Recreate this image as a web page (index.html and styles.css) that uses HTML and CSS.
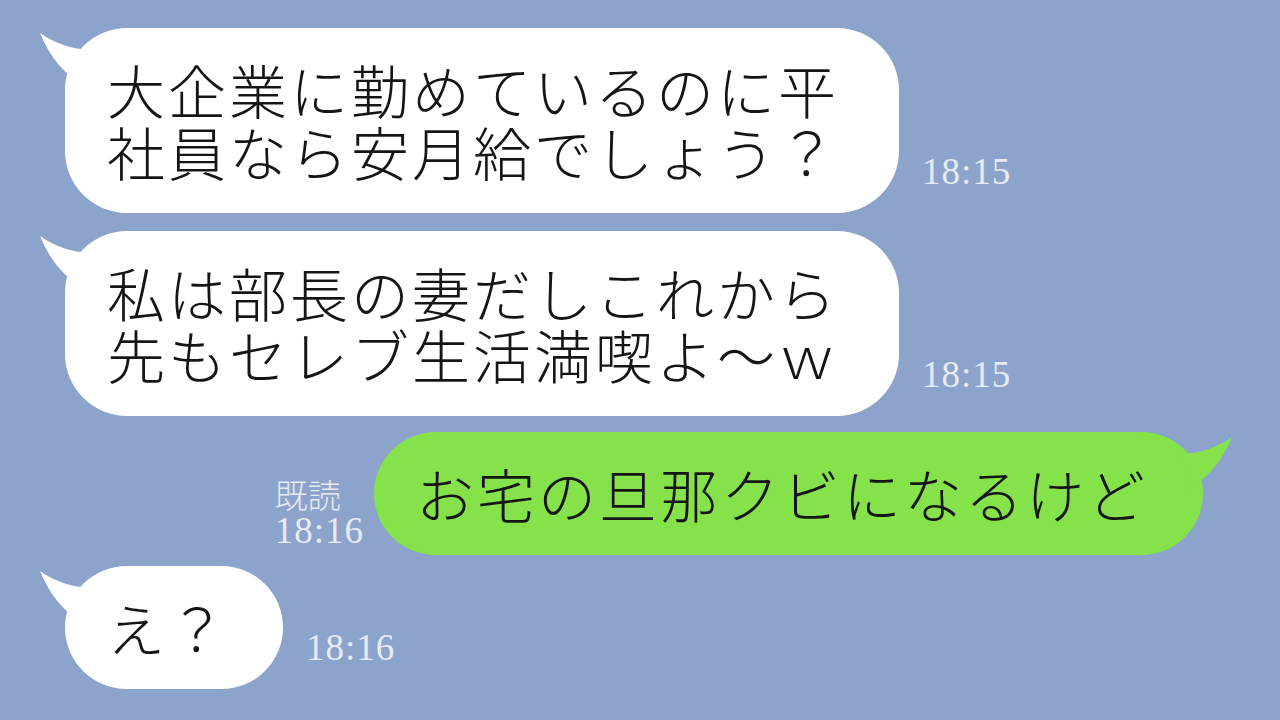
FILE: index.html
```html
<!DOCTYPE html>
<html lang="ja">
<head>
<meta charset="UTF-8" />
<title>トーク</title>
<link rel="stylesheet" href="styles.css">
</head>
<body>

<div class="chat">

    <div class="row left first">
        <div class="bubble white">
            <svg class="tail tail-left" viewBox="0 0 60 60" width="60" height="60">
                <path d="M3 5 Q 24 20 52 22 L 48 58 Q 18 42 3 5 Z" />
            </svg>
            大企業に勤めているのに平<br>社員なら安月給でしょう？
        </div>
        <div class="time">18:15</div>
    </div>

    <div class="row left second">
        <div class="bubble white">
            <svg class="tail tail-left" viewBox="0 0 60 60" width="60" height="60">
                <path d="M3 5 Q 24 20 52 22 L 48 58 Q 18 42 3 5 Z" />
            </svg>
            私は部長の妻だしこれから<br>先もセレブ生活満喫よ～ｗ
        </div>
        <div class="time">18:15</div>
    </div>

    <div class="row right third">
        <div class="read-info">
            <div class="read">既読</div>
            <div class="time">18:16</div>
        </div>
        <div class="bubble green">
            <svg class="tail tail-right" viewBox="0 0 60 60" width="60" height="60">
                <path d="M57 5 Q 36 20 8 22 L 12 58 Q 42 42 57 5 Z" />
            </svg>
            お宅の旦那クビになるけど
        </div>
    </div>

    <div class="row left fourth">
        <div class="bubble white short">
            <svg class="tail tail-left" viewBox="0 0 60 60" width="60" height="60">
                <path d="M3 5 Q 24 20 52 22 L 48 58 Q 18 42 3 5 Z" />
            </svg>
            え？
        </div>
        <div class="time">18:16</div>
    </div>

</div>

</body>
</html>
```

FILE: styles.css
```css
body {
    margin: 0;
    padding: 0;
    width: 1280px;
    height: 720px;
    overflow: hidden;
    background-color: #8ca3cb;
    font-family: "Noto Sans CJK JP", sans-serif;
}

.chat {
    display: flex;
    flex-direction: column;
    padding-top: 28px;
}

.row {
    display: flex;
    align-items: flex-end;
}

.row.left {
    padding-left: 65px;
    gap: 23px;
}

.row.right {
    justify-content: flex-end;
    padding-right: 77px;
    gap: 10px;
}

.second {
    margin-top: 18px;
}

.third {
    margin-top: 16px;
}

.fourth {
    margin-top: 11px;
}

/* 吹き出し */
.bubble {
    position: relative;
    padding: 30px 60px 31px 42px;
    border-radius: 62px;
    font-size: 58px;
    line-height: 62px;
    letter-spacing: 3px;
    font-weight: 300;
    color: #151515;
    white-space: nowrap;
}

.bubble.white {
    background-color: #ffffff;
}

.bubble.short {
    padding-right: 54px;
}

.bubble.green {
    background-color: #85e24a;
    padding-left: 42px;
    padding-right: 55px;
}

.tail {
    position: absolute;
    top: 0;
}

.tail-left {
    left: -28px;
    fill: #ffffff;
}

.tail-right {
    right: -32px;
    fill: #85e24a;
}

/* 時刻 */
.time {
    font-family: "Liberation Serif", serif;
    font-size: 37px;
    line-height: 37px;
    letter-spacing: 1px;
    color: rgba(255, 255, 255, 0.8);
    margin-bottom: 23px;
}

.read-info {
    display: flex;
    flex-direction: column;
    align-items: flex-start;
    margin-bottom: 6px;
}

.read-info .time {
    margin-bottom: 0;
}

.read {
    font-family: "Noto Sans CJK JP", sans-serif;
    font-size: 33px;
    line-height: 36px;
    font-weight: 300;
    color: rgba(255, 255, 255, 0.8);
}
```
